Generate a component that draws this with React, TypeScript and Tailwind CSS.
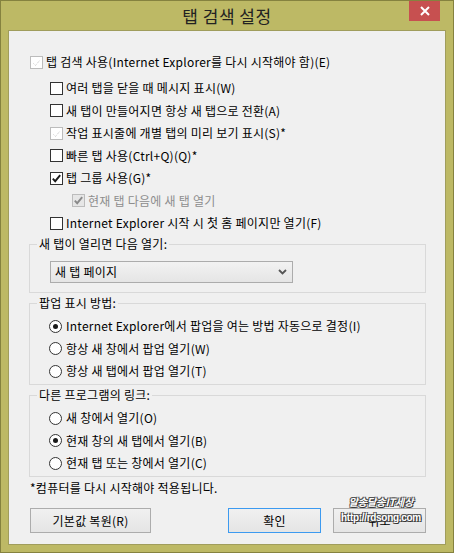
import { ReactNode } from "react";

type BoxKind = "empty" | "dotted" | "checked" | "disabledChecked";

const CheckBox = ({ kind }: { kind: BoxKind }) => {
  const light = kind === "dotted" || kind === "disabledChecked";
  return (
    <span
      className={`inline-flex w-[13px] h-[13px] shrink-0 border ${
        light ? "border-[#bcbcbc]" : "border-[#333333]"
      } ${kind === "disabledChecked" ? "bg-[#e6e6e6]" : "bg-white"}`}
    >
      {kind === "checked" && (
        <svg width="11" height="11" viewBox="0 0 11 11">
          <path d="M1.8 5.6 L4.2 8.2 L9.2 2.2" fill="none" stroke="#1a1a1a" strokeWidth="1.9" />
        </svg>
      )}
      {kind === "disabledChecked" && (
        <svg width="11" height="11" viewBox="0 0 11 11">
          <path d="M1.8 5.6 L4.2 8.2 L9.2 2.2" fill="none" stroke="#8a8a8a" strokeWidth="1.9" />
        </svg>
      )}
      {kind === "dotted" && (
        <svg width="11" height="11" viewBox="0 0 11 11">
          <path d="M2.5 6.5 L4.5 8.5 L9 3" fill="none" stroke="#c4c4c4" strokeWidth="1" strokeDasharray="1 1" />
        </svg>
      )}
    </span>
  );
};

const CheckRow = ({
  kind,
  indent,
  disabled = false,
  children,
}: {
  kind: BoxKind;
  indent: string;
  disabled?: boolean;
  children: ReactNode;
}) => (
  <div className={`flex items-center h-[22.5px] ${indent}`}>
    <CheckBox kind={kind} />
    <span className={`ml-[3px] whitespace-nowrap ${disabled ? "text-[#8d8d8d]" : "text-black"}`}>{children}</span>
  </div>
);

const Radio = ({ on, children }: { on?: boolean; children: ReactNode }) => (
  <div className="flex items-center h-[22.5px]">
    <span className="flex items-center justify-center w-[13px] h-[13px] shrink-0 rounded-full border border-[#333333] bg-white">
      {on && <span className="w-[5px] h-[5px] rounded-full bg-[#1a1a1a]" />}
    </span>
    <span className="ml-[4px] whitespace-nowrap">{children}</span>
  </div>
);

const Group = ({ title, children, className = "" }: { title: string; children: ReactNode; className?: string }) => (
  <fieldset className={`border border-[#d9d9d9] px-0 ${className}`}>
    <legend className="ml-[7px] px-[2px] leading-[16px] whitespace-nowrap">{title}</legend>
    {children}
  </fieldset>
);

const Button = ({ w, focused, children }: { w: string; focused?: boolean; children: ReactNode }) => (
  <div
    className={`${w} h-[25px] flex items-center justify-center border ${
      focused ? "border-[#3c9af0]" : "border-[#acacac]"
    } bg-gradient-to-b from-[#f0f0f0] to-[#e5e5e5]`}
  >
    {children}
  </div>
);

export default function App() {
  return (
    <div className="w-[454px] h-[553px] border border-[#85823f] bg-[#bdb965] flex flex-col px-[7px] pb-[7px] font-['Noto_Sans_CJK_KR',sans-serif] text-[12px] leading-[16px] tracking-[0.25px] text-black">
      <div className="relative h-[29px] flex items-center justify-center">
        <span className="text-[17px] leading-[20px] text-[#222222] tracking-[0.5px]">탭 검색 설정</span>
        <div className="absolute top-0 right-[6px] w-[31px] h-[20px] bg-[#c75050] flex items-center justify-center">
          <svg width="10" height="10" viewBox="0 0 10 10">
            <path d="M1 1 L9 9 M9 1 L1 9" stroke="white" strokeWidth="2" />
          </svg>
        </div>
      </div>

      <div className="flex-1 border border-[#a09d5c] bg-[#f0f0f0] pt-[20px] pl-[20px] pr-[19px] flex flex-col">
        <div className="flex items-center h-[22px] ml-[1px]">
          <CheckBox kind="dotted" />
          <span className="ml-[3px] whitespace-nowrap">탭 검색 사용(Internet Explorer를 다시 시작해야 함)(E)</span>
        </div>
        <div className="mt-[4px] flex flex-col">
          <CheckRow kind="empty" indent="ml-[21px]">여러 탭을 닫을 때 메시지 표시(W)</CheckRow>
          <CheckRow kind="empty" indent="ml-[21px]">새 탭이 만들어지면 항상 새 탭으로 전환(A)</CheckRow>
          <CheckRow kind="dotted" indent="ml-[21px]">작업 표시줄에 개별 탭의 미리 보기 표시(S)*</CheckRow>
          <CheckRow kind="empty" indent="ml-[21px]">빠른 탭 사용(Ctrl+Q)(Q)*</CheckRow>
          <CheckRow kind="checked" indent="ml-[21px]">탭 그룹 사용(G)*</CheckRow>
          <CheckRow kind="disabledChecked" indent="ml-[43px]" disabled>
            현재 탭 다음에 새 탭 열기
          </CheckRow>
          <CheckRow kind="empty" indent="ml-[21px]">Internet Explorer 시작 시 첫 홈 페이지만 열기(F)</CheckRow>
        </div>

        <Group title="새 탭이 열리면 다음 열기:" className="mt-[1.5px]">
          <div className="pt-[9px] pb-[9px] pl-[20px]">
            <div className="w-[243px] h-[22px] border border-[#acacac] bg-gradient-to-b from-[#f2f2f2] to-[#e5e5e5] flex items-center justify-between pl-[4px] pr-[5px]">
              <span>새 탭 페이지</span>
              <svg width="9" height="6" viewBox="0 0 9 6">
                <path d="M1 1 L4.5 4.5 L8 1" fill="none" stroke="#555555" strokeWidth="1.8" />
              </svg>
            </div>
          </div>
        </Group>

        <Group title="팝업 표시 방법:" className="mt-[2px]">
          <div className="pt-[4px] pb-[1.5px] pl-[19px]">
            <Radio on>Internet Explorer에서 팝업을 여는 방법 자동으로 결정(I)</Radio>
            <Radio>항상 새 창에서 팝업 열기(W)</Radio>
            <Radio>항상 새 탭에서 팝업 열기(T)</Radio>
          </div>
        </Group>

        <Group title="다른 프로그램의 링크:" className="mt-[2px]">
          <div className="pt-[4px] pb-[1.5px] pl-[19px]">
            <Radio>새 창에서 열기(O)</Radio>
            <Radio on>현재 창의 새 탭에서 열기(B)</Radio>
            <Radio>현재 탭 또는 창에서 열기(C)</Radio>
          </div>
        </Group>

        <div className="mt-[3px] ml-[1px] h-[16px] whitespace-nowrap">*컴퓨터를 다시 시작해야 적용됩니다.</div>

        <div className="relative mt-[12px] flex ml-[1px]">
          <Button w="w-[123px]">기본값 복원(R)</Button>
          <div className="ml-[77px]">
            <Button w="w-[93px]" focused>
              확인
            </Button>
          </div>
          <div className="ml-[12px]">
            <Button w="w-[93px]">취소</Button>
          </div>
          <div className="absolute left-[306px] top-[-12px] w-[90px] flex flex-col items-center font-['Liberation_Sans',sans-serif] font-bold tracking-normal text-white [text-shadow:1px_1px_0_#333,-1px_-1px_0_#555,1px_-1px_0_#555,-1px_1px_0_#555]">
            <span className="text-[10px] leading-[12px] italic font-['Noto_Sans_CJK_KR',sans-serif]">알송달송IT세상</span>
            <span className="mt-[4px] text-[10px] leading-[12px] tracking-[-0.3px]">http://rdsong.com</span>
          </div>
        </div>
      </div>
    </div>
  );
}
